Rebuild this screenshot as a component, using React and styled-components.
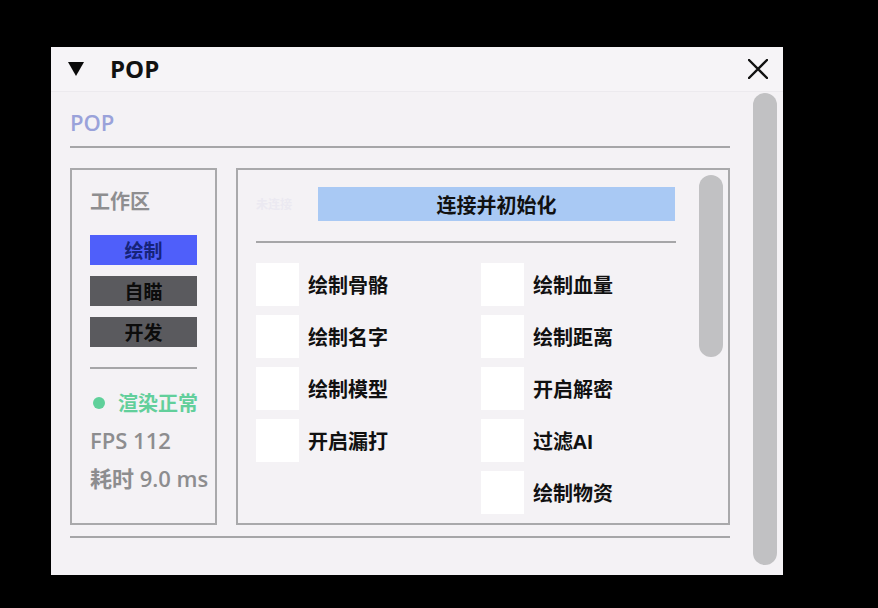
import React from "react";
import styled, { createGlobalStyle } from "styled-components";

const Global = createGlobalStyle`
  html, body { margin: 0; padding: 0; background: #000; }
  body { font-family: "Open Sans", "Noto Sans CJK SC", sans-serif; }
`;

const Page = styled.div`
  width: 878px;
  height: 608px;
  background: #000;
  padding: 47px 0 0 51px;
  box-sizing: border-box;
`;

const Window = styled.div`
  width: 732px;
  height: 528px;
  background: #f4f2f5;
  display: flex;
  flex-direction: column;
`;

const TitleBar = styled.div`
  height: 44px;
  display: flex;
  align-items: center;
  padding: 0 15px 0 17px;
  border-bottom: 1px solid #eceaee;
  background: #f6f4f7;
`;

const TitleText = styled.div`
  margin-left: 26px;
  font-size: 24px;
  font-weight: 700;
  color: #111;
  flex: 1;
  line-height: 1;
  padding-bottom: 1px;
`;

const Body = styled.div`
  flex: 1;
  display: flex;
  min-height: 0;
`;

const Content = styled.div`
  width: 660px;
  margin-left: 19px;
  display: flex;
  flex-direction: column;
`;

const Heading = styled.div`
  margin-top: 15px;
  font-size: 22px;
  line-height: 30px;
  font-weight: 600;
  color: #9aa2da;
`;

const Rule = styled.div`
  height: 2px;
  background: #a6a6a8;
  width: ${(p) => p.$w || "100%"};
  margin-top: ${(p) => p.$mt || 0}px;
  flex-shrink: 0;
`;

const Panels = styled.div`
  margin-top: 20px;
  height: 357px;
  display: flex;
  gap: 19px;
`;

const Panel = styled.div`
  border: 2px solid #a9a9ab;
  box-sizing: border-box;
  height: 100%;
  overflow: hidden;
`;

const LeftPanel = styled(Panel)`
  width: 147px;
  padding: 18px 0 0 18px;
  display: flex;
  flex-direction: column;
`;

const SectionLabel = styled.div`
  font-size: 20px;
  line-height: 28px;
  font-weight: 700;
  color: #8e8e90;
`;

const TabList = styled.div`
  margin-top: 19px;
  display: flex;
  flex-direction: column;
  gap: 11px;
`;

const Tab = styled.div`
  width: 107px;
  height: 30px;
  display: flex;
  align-items: center;
  justify-content: center;
  background: ${(p) => (p.$active ? "#4f5ffa" : "#5a5a5e")};
  color: ${(p) => (p.$active ? "#16237a" : "#0c0c0c")};
  font-size: 19px;
  font-weight: 700;
`;

const Stats = styled.div`
  margin-top: 15px;
  display: flex;
  flex-direction: column;
`;

const StatLine = styled.div`
  display: flex;
  align-items: center;
  height: 37px;
  font-size: ${(p) => (p.$small ? 20 : 22)}px;
  font-weight: 600;
  color: ${(p) => p.$color || "#8d8d8f"};
  white-space: nowrap;
`;

const Dot = styled.span`
  width: 12px;
  height: 12px;
  border-radius: 50%;
  background: #5fd09a;
  margin: 0 13px 0 3px;
`;

const RightPanel = styled(Panel)`
  width: 494px;
  display: flex;
  padding: 0 5px 0 18px;
`;

const RightMain = styled.div`
  width: 420px;
  padding-top: 17px;
  display: flex;
  flex-direction: column;
`;

const TopRow = styled.div`
  display: flex;
  align-items: center;
  height: 34px;
`;

const FaintLabel = styled.div`
  width: 62px;
  font-size: 12px;
  line-height: 13px;
  color: #ebe9f1;
  font-weight: 600;
`;

const ConnectButton = styled.div`
  width: 357px;
  height: 34px;
  background: #a9c9f4;
  display: flex;
  align-items: center;
  justify-content: center;
  font-size: 20px;
  font-weight: 700;
  color: #111;
`;

const Grid = styled.div`
  margin-top: 20px;
  display: grid;
  grid-template-columns: 225px 195px;
  grid-auto-flow: column;
  grid-template-rows: repeat(5, 43px);
  row-gap: 9px;
`;

const Check = styled.div`
  display: flex;
  align-items: center;
  font-size: 20px;
  font-weight: 700;
  color: #111;
  white-space: nowrap;
`;

const Box = styled.span`
  width: 43px;
  height: 43px;
  background: #ffffff;
  margin-right: 9px;
  flex-shrink: 0;
`;

const Track = styled.div`
  margin-left: 23px;
  padding-top: 5px;
`;

const Thumb = styled.div`
  width: 24px;
  height: ${(p) => p.$h}px;
  border-radius: 12px;
  background: #c1c1c3;
`;

const OuterTrack = styled.div`
  margin-left: 23px;
  padding-top: 1px;
`;

const left = ["绘制骨骼", "绘制名字", "绘制模型", "开启漏打", null];
const right = ["绘制血量", "绘制距离", "开启解密", "过滤AI", "绘制物资"];

export default function App() {
  return (
    <>
      <Global />
      <Page>
        <Window>
          <TitleBar>
            <svg width="16" height="14" viewBox="0 0 16 14">
              <polygon points="0,0 16,0 8,14" fill="#0a0a0a" />
            </svg>
            <TitleText>POP</TitleText>
            <svg width="20" height="20" viewBox="0 0 20 20">
              <path d="M1 1 L19 19 M19 1 L1 19" stroke="#111" strokeWidth="2.4" strokeLinecap="round" />
            </svg>
          </TitleBar>
          <Body>
            <Content>
              <Heading>POP</Heading>
              <Rule $mt={9} />
              <Panels>
                <LeftPanel>
                  <SectionLabel>工作区</SectionLabel>
                  <TabList>
                    <Tab $active>绘制</Tab>
                    <Tab>自瞄</Tab>
                    <Tab>开发</Tab>
                  </TabList>
                  <Rule $w="107px" $mt={20} />
                  <Stats>
                    <StatLine $color="#62cf9b" $small>
                      <Dot />
                      渲染正常
                    </StatLine>
                    <StatLine>FPS 112</StatLine>
                    <StatLine>耗时 9.0 ms</StatLine>
                  </Stats>
                </LeftPanel>
                <RightPanel>
                  <RightMain>
                    <TopRow>
                      <FaintLabel>未连接</FaintLabel>
                      <ConnectButton>连接并初始化</ConnectButton>
                    </TopRow>
                    <Rule $mt={20} />
                    <Grid>
                      {left.map((t, i) =>
                        t ? (
                          <Check key={"l" + i}>
                            <Box />
                            {t}
                          </Check>
                        ) : (
                          <div key={"l" + i} />
                        )
                      )}
                      {right.map((t, i) => (
                        <Check key={"r" + i}>
                          <Box />
                          {t}
                        </Check>
                      ))}
                    </Grid>
                  </RightMain>
                  <Track>
                    <Thumb $h={182} />
                  </Track>
                </RightPanel>
              </Panels>
              <Rule $mt={11} />
            </Content>
            <OuterTrack>
              <Thumb $h={472} />
            </OuterTrack>
          </Body>
        </Window>
      </Page>
    </>
  );
}
